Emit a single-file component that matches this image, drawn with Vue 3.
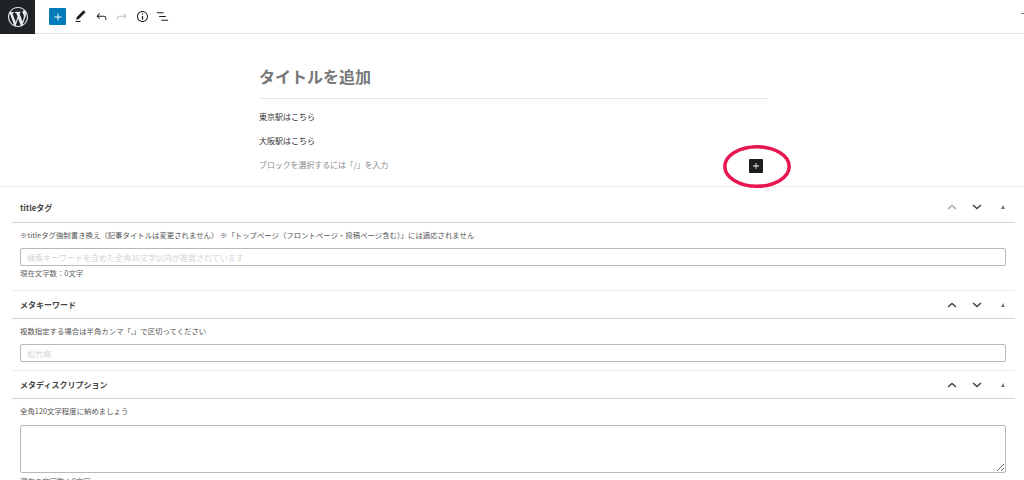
<script setup>
const sections = [
  {
    title: 'titleタグ',
    desc: '※titleタグ強制書き換え（記事タイトルは変更されません） ※「トップページ（フロントページ・投稿ページ含む）」には適応されません',
    placeholder: '検索キーワードを含めた全角30文字以内が推奨されています',
    count: '現在文字数：0文字',
    firstUpDisabled: true,
  },
  {
    title: 'メタキーワード',
    desc: '複数指定する場合は半角カンマ「,」で区切ってください',
    placeholder: '松竹梅',
  },
  {
    title: 'メタディスクリプション',
    desc: '全角120文字程度に納めましょう',
    multiline: true,
    count: '現在の文字数：0文字',
  },
]
</script>

<template>
  <div class="editor">
    <header class="topbar">
      <div class="logo">
        <svg viewBox="0 0 20 20" width="20" height="20">
          <path fill="#e9eaeb" d="M20 10c0-5.51-4.49-10-10-10C4.48 0 0 4.49 0 10c0 5.52 4.48 10 10 10 5.51 0 10-4.48 10-10zM7.78 15.37L4.37 6.22c.55-.02 1.17-.08 1.17-.08.5-.06.44-1.13-.06-1.11 0 0-1.45.11-2.37.11-.18 0-.37 0-.58-.01C4.12 2.69 6.87 1.11 10 1.11c2.33 0 4.45.87 6.05 2.34-.68-.11-1.65.39-1.65 1.58 0 .74.45 1.36.9 2.1.35.61.55 1.36.55 2.46 0 1.49-1.4 5-1.4 5l-3.03-8.37c.54-.02.82-.17.82-.17.5-.05.44-1.25-.06-1.22 0 0-1.44.12-2.38.12-.87 0-2.33-.12-2.33-.12-.5-.03-.56 1.2-.06 1.22l.92.08 1.26 3.41zM17.41 10c.24-.64.74-1.87.43-4.25.7 1.29 1.05 2.71 1.05 4.25 0 3.29-1.73 6.24-4.4 7.78.97-2.59 1.94-5.15 2.92-7.78zM6.1 18.09C3.12 16.65 1.11 13.53 1.11 10c0-1.3.23-2.48.72-3.59C3.25 10.3 4.67 14.2 6.1 18.09zm4.03-6.63l2.58 6.98c-.86.29-1.76.45-2.71.45-.79 0-1.57-.11-2.29-.33.81-2.38 1.62-4.74 2.42-7.1z" />
        </svg>
      </div>
      <div class="tools">
        <button class="add">
          <svg viewBox="0 0 24 24" width="14" height="14"><path fill="#fff" d="M18 11.2h-5.2V6h-1.6v5.2H6v1.6h5.2V18h1.6v-5.2H18z" /></svg>
        </button>
        <svg class="tool" viewBox="0 0 24 24"><path d="M20.1 5.1L16.9 2 6.2 12.7l-1.3 4.4 4.5-1.3L20.1 5.1zM4 20.8h8v-1.5H4v1.5z" /></svg>
        <svg class="tool" viewBox="0 0 24 24"><path d="M18.3 11.7c-.6-.6-1.4-.9-2.3-.9H6.7l2.9-3.3-1.1-1-4.5 5L8.5 16l1-1-2.7-2.7H16c.5 0 .9.2 1.3.5 1 1 1 3.4 1 4.5v.3h1.5v-.2c0-1.5 0-4.3-1.5-5.7z" /></svg>
        <svg class="tool off" viewBox="0 0 24 24"><path d="M15.6 6.5l-1.1 1 2.9 3.3H8c-.9 0-1.7.3-2.3.9-1.4 1.5-1.4 4.2-1.4 5.6v.2h1.5v-.3c0-1.1 0-3.5 1-4.5.3-.3.7-.5 1.3-.5h9.2L14.5 15l1.1 1.1 4.6-4.6-4.6-5z" /></svg>
        <svg class="tool" viewBox="0 0 24 24"><path d="M12 3.2c-4.8 0-8.8 3.9-8.8 8.8 0 4.8 3.9 8.8 8.8 8.8 4.8 0 8.8-3.9 8.8-8.8 0-4.8-4-8.8-8.8-8.8zm0 16c-4 0-7.2-3.3-7.2-7.2C4.8 8 8 4.8 12 4.8s7.2 3.3 7.2 7.2c0 4-3.2 7.2-7.2 7.2zM11 17h2v-6h-2v6zm0-8h2V7h-2v2z" /></svg>
        <svg class="tool" viewBox="0 0 24 24"><path d="M13.8 5.2H3v1.5h10.8V5.2zm-3.6 12v1.5H21v-1.5H10.2zm7.2-6H6.6v1.5h10.8v-1.5z" /></svg>
      </div>
      <span class="edge-mark"></span>
    </header>

    <main class="canvas">
      <div class="column">
        <h1 class="post-title">タイトルを追加</h1>
        <p class="para first">東京駅はこちら</p>
        <p class="para">大阪駅はこちら</p>
        <div class="para placeholder">
          <span class="hint">ブロックを選択するには「/」を入力</span>
          <span class="inserter">
            <svg viewBox="0 0 24 24" width="12" height="12"><path fill="#fff" d="M18 11.2h-5.2V6h-1.6v5.2H6v1.6h5.2V18h1.6v-5.2H18z" /></svg>
            <svg class="circle" viewBox="0 0 70 45" width="70" height="45">
              <ellipse cx="35" cy="22.5" rx="32.2" ry="19.8" fill="none" stroke="#e7164f" stroke-width="3.5" />
            </svg>
          </span>
        </div>
      </div>
    </main>

    <section class="metaboxes">
      <div v-for="s in sections" :key="s.title" class="box">
        <div class="box-head">
          <h2>{{ s.title }}</h2>
          <div class="controls">
            <svg viewBox="0 0 10 6" :class="{ dim: s.firstUpDisabled }"><path d="M1 5l4-3.6L9 5" /></svg>
            <svg viewBox="0 0 10 6"><path d="M1 1l4 3.6L9 1" /></svg>
            <span class="tri"></span>
          </div>
        </div>
        <div class="box-body">
          <p class="desc">{{ s.desc }}</p>
          <textarea v-if="s.multiline" class="field area"></textarea>
          <input v-else class="field" type="text" :placeholder="s.placeholder" />
          <p v-if="s.count" class="count">{{ s.count }}</p>
        </div>
      </div>
    </section>
  </div>
</template>

<style>
html,
body {
  margin: 0;
  background: #fff;
}
</style>

<style scoped>
.editor {
  width: 1024px;
  height: 480px;
  overflow: hidden;
  background: #fff;
  color: #444;
  font-family: "Noto Sans CJK JP", "Liberation Sans", sans-serif;
  font-size: 8px;
}

.topbar {
  display: flex;
  align-items: center;
  height: 33px;
  border-bottom: 1px solid #e4e4e4;
}

.logo {
  display: flex;
  align-items: center;
  justify-content: center;
  width: 35px;
  height: 34px;
  margin-bottom: -1px;
  background: #1e2327;
}

.tools {
  display: flex;
  align-items: center;
  gap: 5.5px;
  margin-left: 14px;
}

.add {
  display: flex;
  align-items: center;
  justify-content: center;
  width: 17px;
  height: 17px;
  margin-right: 1.5px;
  padding: 0;
  border: 0;
  border-radius: 1px;
  background: #007cba;
}

.tool {
  width: 15px;
  height: 15px;
  fill: #1e1e1e;
}

.tool.off {
  fill: #c4c4c4;
}

.edge-mark {
  width: 3px;
  height: 1px;
  margin: 0 0 7px auto;
  background: #777;
}

.canvas {
  height: 153px;
  box-sizing: border-box;
  padding-top: 33px;
  border-bottom: 1px solid #ececec;
}

.column {
  width: 509px;
  margin-left: 259px;
}

.post-title {
  height: 31px;
  margin: 0;
  border-bottom: 1px solid #e8e8e8;
  color: #777;
  font-size: 16px;
  line-height: 18px;
  font-weight: 700;
}

.para {
  height: 24px;
  margin: 0;
  line-height: 22px;
  color: #333;
}

.para.first {
  margin-top: 7px;
}

.placeholder {
  display: flex;
  align-items: center;
  justify-content: space-between;
  color: #8a8a8a;
}

.hint {
  padding-bottom: 2px;
  font-size: 7.9px;
}

.inserter {
  position: relative;
  display: flex;
  align-items: center;
  justify-content: center;
  width: 14px;
  height: 14px;
  margin-right: 5px;
  border-radius: 1px;
  background: #1e1e1e;
}

.circle {
  position: absolute;
  left: -27px;
  top: -15px;
}

.metaboxes {
  padding: 0 9px 0 12px;
}

.box-head {
  display: flex;
  align-items: center;
  justify-content: space-between;
  height: 30px;
  padding-top: 5px;
  border-bottom: 1px solid #d5d5d5;
}

.box + .box .box-head {
  height: 27px;
  padding-top: 0;
}

.box-head h2 {
  margin: 0 0 0 8px;
  color: #444;
  font-size: 8px;
  font-weight: 700;
}

.box + .box {
  border-top: 1px solid #ececec;
}

.controls {
  display: flex;
  align-items: center;
  gap: 15px;
  margin-right: 10px;
}

.controls svg {
  width: 10px;
  height: 6px;
  fill: none;
  stroke: #444;
  stroke-width: 1.5;
}

.controls svg.dim {
  stroke: #aaa;
}

.tri {
  width: 0;
  height: 0;
  margin-left: 4px;
  border: 2.5px solid transparent;
  border-top: 0;
  border-bottom: 4px solid #777;
}

.box-body {
  padding: 0 9px 0 8px;
}

.desc {
  margin: 0;
  padding-top: 6px;
  height: 19px;
  line-height: 11px;
  font-size: 7.4px;
  color: #555;
}

.field {
  display: block;
  box-sizing: border-box;
  width: 100%;
  height: 18px;
  margin: 0 0 8px;
  padding: 0 6px;
  border: 1px solid #b8b8b8;
  border-radius: 2px;
  background: #fff;
  font: inherit;
}

.field::placeholder {
  color: #d4d4d4;
}

.area {
  height: 48px;
  margin: 1px 0 1px;
}

.field:not(.area):has(+ .count) {
  margin-bottom: 0;
}

.count {
  height: 24px;
  margin: 0;
  line-height: 14px;
  font-size: 7.4px;
  color: #666;
}
</style>
